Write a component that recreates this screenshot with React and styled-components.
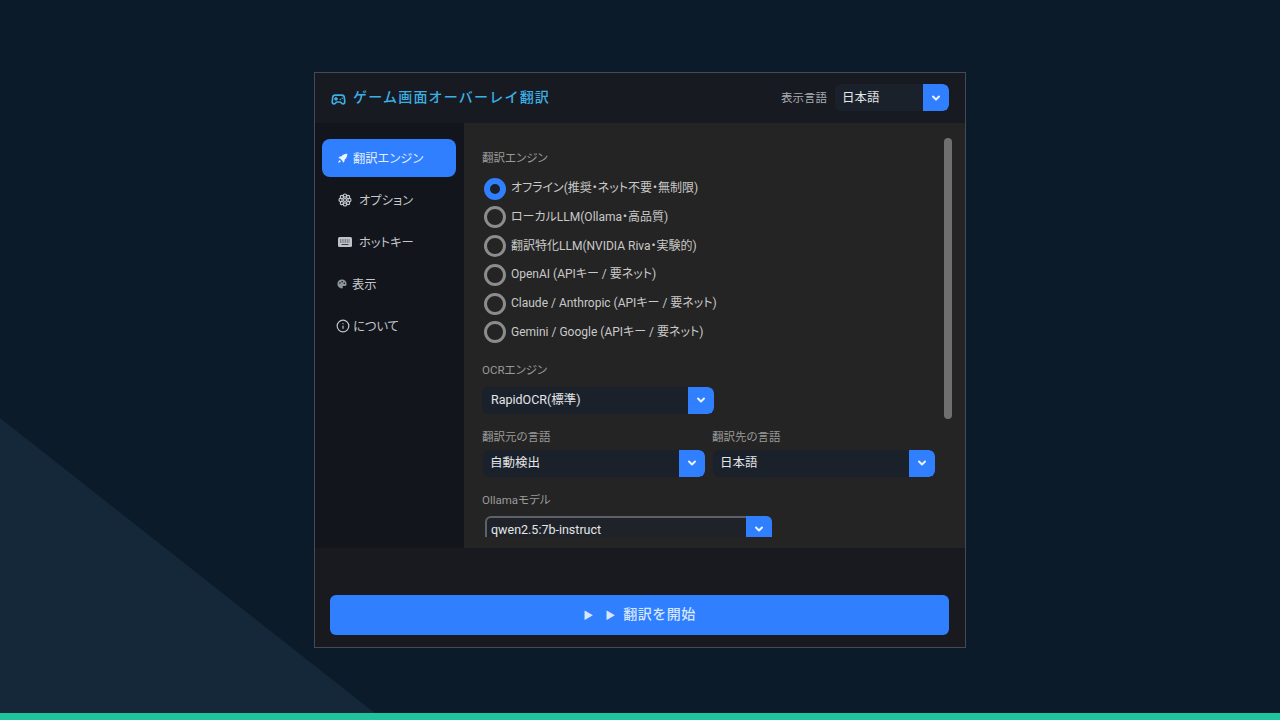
import React from 'react'
import styled, { createGlobalStyle } from 'styled-components'
import { Gamepad2, ChevronDown, Info } from 'lucide-react'

const GlobalStyle = createGlobalStyle`
  html, body {
    margin: 0;
    height: 100%;
    background: #0c1b2a;
  }
  * {
    box-sizing: border-box;
  }
  #root {
    height: 100%;
    font-family: Roboto, "Noto Sans CJK JP", sans-serif;
  }
`

const Page = styled.div`
  position: relative;
  height: 720px;
  overflow: hidden;
  display: flex;
  flex-direction: column;
  background: #0c1b2a;

  &::before {
    content: '';
    position: absolute;
    left: 0;
    top: 418px;
    width: 376px;
    height: 296px;
    background: #14283a;
    clip-path: polygon(0 0, 100% 100%, 0 100%);
  }
`

const Stage = styled.div`
  position: relative;
  flex: 1;
  display: flex;
  justify-content: center;
  padding-top: 72px;
`

const BottomBar = styled.div`
  position: relative;
  height: 7px;
  background: #1fc49e;
`

const Window = styled.div`
  width: 652px;
  height: 576px;
  border: 1px solid #434a5a;
  background: #181a20;
  display: flex;
  flex-direction: column;
`

const Header = styled.header`
  height: 50px;
  flex-shrink: 0;
  display: flex;
  align-items: center;
  padding: 0 16px 1px 16px;
  background: #171a20;
`

const Title = styled.h1`
  flex: 1;
  margin: 0;
  padding-bottom: 3px;
  display: flex;
  align-items: center;
  gap: 7px;
  font-size: 14px;
  font-weight: 500;
  letter-spacing: 1.2px;
  color: #3cb0e6;
  svg {
    margin-top: 7px;
  }
`

const LangLabel = styled.span`
  margin-right: 8px;
  padding-bottom: 1px;
  font-size: 11.5px;
  color: #a9adb3;
`

const Body = styled.div`
  height: 425px;
  flex-shrink: 0;
  display: flex;
`

const Sidebar = styled.nav`
  width: 149px;
  flex-shrink: 0;
  padding: 16px 8px 0 7px;
  background: #12151b;
  display: flex;
  flex-direction: column;
  gap: 4px;
`

const NavItem = styled.div`
  height: 38px;
  display: flex;
  align-items: center;
  gap: ${p => p.$gap}px;
  padding-left: ${p => p.$pad}px;
  border-radius: 8px;
  font-size: 12.3px;
  font-feature-settings: "palt";
  color: ${p => (p.$active ? '#e4eefc' : '#c4c7cb')};
  background: ${p => (p.$active ? '#2f7fff' : 'transparent')};
`

const Content = styled.main`
  position: relative;
  flex: 1;
  min-width: 0;
  overflow: hidden;
  padding: 28px 0 0 18px;
  background: #242424;
`

const ScrollThumb = styled.div`
  position: absolute;
  top: 15px;
  right: 13px;
  width: 8px;
  height: 281px;
  border-radius: 4px;
  background: #6f6f6f;
`

const SectionLabel = styled.div`
  font-size: 11.5px;
  line-height: 14px;
  font-feature-settings: "palt";
  color: #9a9a9a;
`

const RadioGroup = styled.div`
  margin: 12.5px 0 0 2px;
  display: flex;
  flex-direction: column;
  gap: 6.8px;
`

const RadioRow = styled.label`
  height: 22px;
  display: flex;
  align-items: center;
  gap: 5px;
  font-size: 12px;
  line-height: 18px;
  font-feature-settings: "palt";
  color: #c9c9c9;
`

const RadioText = styled.span`
  margin-top: -1px;
`

const RadioMark = styled.span`
  width: 22px;
  height: 22px;
  flex-shrink: 0;
  border-radius: 50%;
  border: ${p => (p.$checked ? '6px solid #2f7fff' : '3px solid #8c8c8c')};
  background: ${p => (p.$checked ? '#1c2027' : 'transparent')};
`

const Field = styled.div`
  margin-top: ${p => p.$top}px;
`

const FieldRow = styled.div`
  margin-top: 16px;
  display: flex;
  gap: 8px;
`

const HalfField = styled.div`
  width: 222px;
`

const SelectBox = styled.div`
  width: ${p => p.$width || '100%'};
  height: 27px;
  margin: ${p => p.$margin || '0'};
  display: flex;
  align-items: center;
  padding-left: ${p => p.$pad || 7}px;
  border-radius: 6px;
  overflow: hidden;
  font-size: 12.5px;
  color: #e3e5e8;
  background: #1b212b;
`

const SelectValue = styled.span`
  flex: 1;
  padding-bottom: 3px;
`

const Arrow = styled.span`
  width: 26px;
  height: 100%;
  flex-shrink: 0;
  display: flex;
  align-items: center;
  justify-content: center;
  background: #2f7fff;
  color: #eaf2ff;
  border-radius: 0 6px 6px 0;
`

const OpenSelect = styled.div`
  width: 287px;
  height: 21px;
  margin: 9px 0 0 3px;
  display: flex;
  border: 2px solid #5c6068;
  border-bottom: 0;
  border-right: 0;
  border-radius: 6px 6px 0 0;
  padding-left: 4px;
  font-size: 12.5px;
  color: #e3e5e8;
  background: #1f2329;
`

const OpenValue = styled.span`
  flex: 1;
  line-height: 24px;
`

const OpenArrow = styled(Arrow)`
  height: 21px;
  padding-top: 5px;
  margin-top: -2px;
  border-radius: 0 6px 0 0;
`

const Footer = styled.footer`
  flex: 1;
  display: flex;
  align-items: flex-end;
  padding: 0 16px 12px 15px;
`

const StartButton = styled.button`
  width: 100%;
  height: 40px;
  padding: 0 0 5px;
  border: 0;
  border-radius: 6px;
  background: #2f7fff;
  color: #d6e6ff;
  font-family: inherit;
  font-size: 14px;
  font-weight: 500;
  letter-spacing: 0.5px;
`

const PlayMark = styled.span`
  font-size: 10px;
  letter-spacing: 0;
  margin-right: ${p => p.$gap}px;
`

const Chevron = () => <ChevronDown size={12} strokeWidth={4} />

const RocketIcon = () => (
  <svg width="11" height="11" viewBox="0 0 12 12" fill="#eef4ff">
    <path d="M11.2.8C8.6.6 6.4 1.6 4.6 3.7L3 3.8 1.4 5.4l2 .6 2.6 2.6.6 2 1.6-1.6.1-1.6c2.1-1.8 3.1-4 2.9-6.6z" />
    <path d="M2.6 7.6 1 11l3.4-1.6z" />
  </svg>
)

const GearIcon = () => (
  <svg width="14" height="14" viewBox="0 0 14 14" fill="none" stroke="#c4c7cb" strokeWidth="1.2">
    <circle cx="7" cy="7" r="1.5" />
    <circle cx="7" cy="2.6" r="1.6" />
    <circle cx="7" cy="11.4" r="1.6" />
    <circle cx="2.6" cy="7" r="1.6" />
    <circle cx="11.4" cy="7" r="1.6" />
    <circle cx="3.9" cy="3.9" r="1.6" />
    <circle cx="10.1" cy="3.9" r="1.6" />
    <circle cx="3.9" cy="10.1" r="1.6" />
    <circle cx="10.1" cy="10.1" r="1.6" />
  </svg>
)

const KeyboardIcon = () => (
  <svg width="14" height="10" viewBox="0 0 14 10">
    <rect width="14" height="10" rx="1.5" fill="#bfc3c8" />
    <path d="M2 3h10M2 5h10" stroke="#3a3f46" strokeWidth="1" strokeDasharray="1 .7" />
    <path d="M3.5 7.5h7" stroke="#3a3f46" strokeWidth="1" />
  </svg>
)

const PaletteIcon = () => (
  <svg width="10" height="10" viewBox="0 0 10 10">
    <path d="M5 .6C2.2.6.4 2.6.4 5S2.4 9.4 4.8 9.4c1 0 1.2-.7.9-1.3-.3-.7.1-1.2.9-1.2h1.200C9 6.900 9.600 6 9.600 4.900 9.600 2.300 7.400.6 5 .6z" fill="#8d969b" />
    <circle cx="3" cy="4" r=".8" fill="#12151b" />
    <circle cx="5.200" cy="2.800" r=".8" fill="#12151b" />
    <circle cx="7.300" cy="4.200" r=".8" fill="#12151b" />
  </svg>
)

const engines = [
  { label: 'オフライン(推奨・ネット不要・無制限)', checked: true },
  { label: 'ローカルLLM(Ollama・高品質)' },
  { label: '翻訳特化LLM(NVIDIA Riva・実験的)' },
  { label: 'OpenAI (APIキー / 要ネット)' },
  { label: 'Claude / Anthropic (APIキー / 要ネット)' },
  { label: 'Gemini / Google (APIキー / 要ネット)' }
]

export default function App() {
  return (
    <Page>
      <GlobalStyle />
      <Stage>
        <Window>
          <Header>
            <Title>
              <Gamepad2 size={15} strokeWidth={2.6} />
              ゲーム画面オーバーレイ翻訳
            </Title>
            <LangLabel>表示言語</LangLabel>
            <SelectBox $width="114px">
              <SelectValue>日本語</SelectValue>
              <Arrow><Chevron /></Arrow>
            </SelectBox>
          </Header>
          <Body>
            <Sidebar>
              <NavItem $active $pad={15} $gap={5}><RocketIcon />翻訳エンジン</NavItem>
              <NavItem $pad={16} $gap={7}><GearIcon />オプション</NavItem>
              <NavItem $pad={16} $gap={7}><KeyboardIcon />ホットキー</NavItem>
              <NavItem $pad={15} $gap={5}><PaletteIcon />表示</NavItem>
              <NavItem $pad={14} $gap={3}><Info size={14} />について</NavItem>
            </Sidebar>
            <Content>
              <ScrollThumb />
              <SectionLabel>翻訳エンジン</SectionLabel>
              <RadioGroup>
                {engines.map(e => (
                  <RadioRow key={e.label}>
                    <RadioMark $checked={e.checked} />
                    <RadioText>{e.label}</RadioText>
                  </RadioRow>
                ))}
              </RadioGroup>
              <Field $top={19.5}>
                <SectionLabel>OCRエンジン</SectionLabel>
                <SelectBox $width="232px" $margin="10px 0 0 0" $pad={9}>
                  <SelectValue>RapidOCR(標準)</SelectValue>
                  <Arrow><Chevron /></Arrow>
                </SelectBox>
              </Field>
              <FieldRow>
                <HalfField>
                  <SectionLabel>翻訳元の言語</SectionLabel>
                  <SelectBox $margin="6px 0 0 1px">
                    <SelectValue>自動検出</SelectValue>
                    <Arrow><Chevron /></Arrow>
                  </SelectBox>
                </HalfField>
                <HalfField>
                  <SectionLabel>翻訳先の言語</SectionLabel>
                  <SelectBox $margin="6px 0 0 1px">
                    <SelectValue>日本語</SelectValue>
                    <Arrow><Chevron /></Arrow>
                  </SelectBox>
                </HalfField>
              </FieldRow>
              <Field $top={16}>
                <SectionLabel>Ollamaモデル</SectionLabel>
                <OpenSelect>
                  <OpenValue>qwen2.5:7b-instruct</OpenValue>
                  <OpenArrow><Chevron /></OpenArrow>
                </OpenSelect>
              </Field>
            </Content>
          </Body>
          <Footer>
            <StartButton>
              <PlayMark $gap={12}>{'\u25B6\uFE0E'}</PlayMark>
              <PlayMark $gap={8}>{'\u25B6\uFE0E'}</PlayMark>
              翻訳を開始
            </StartButton>
          </Footer>
        </Window>
      </Stage>
      <BottomBar />
    </Page>
  )
}
